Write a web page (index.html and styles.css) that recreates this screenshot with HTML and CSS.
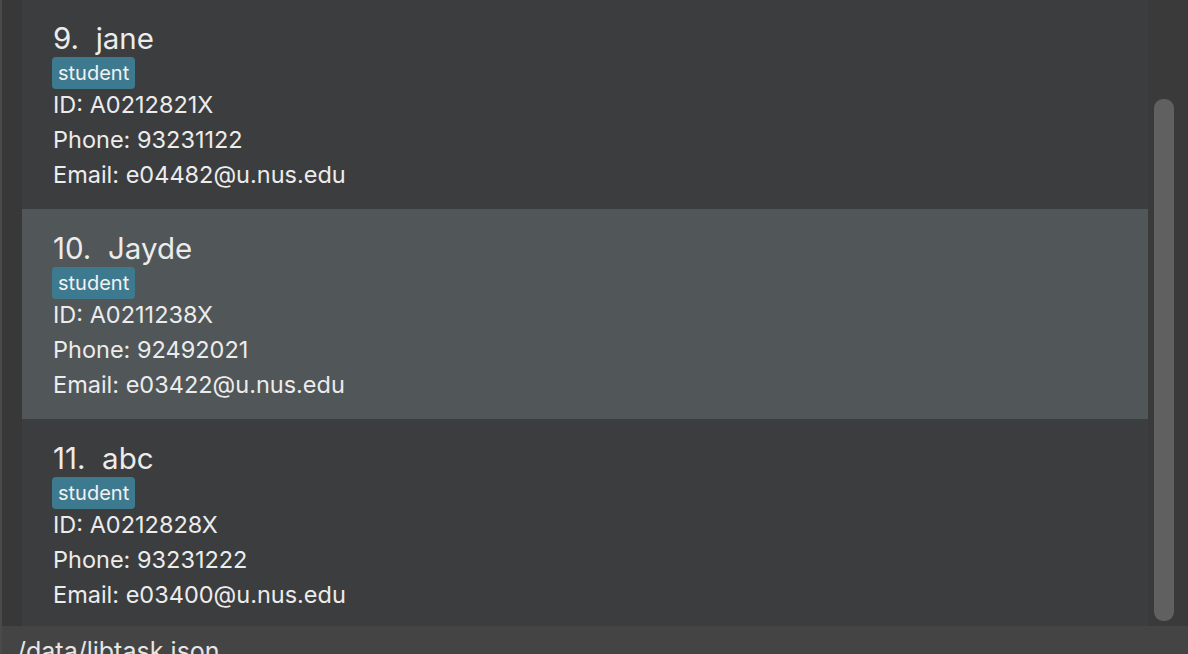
FILE: index.html
```html
<!DOCTYPE html>
<html>
<head>
<meta charset="utf-8">
<link rel="stylesheet" href="styles.css">
</head>
<body>
<div class="app">
  <div class="main">
    <div class="gutter"></div>
    <div class="list">
      <div class="list-inner">
        <div class="card">
          <div class="name">9.&nbsp; jane</div>
          <div class="tags"><span class="tag">student</span></div>
          <div class="details">
            <div>ID: A0212821X</div>
            <div>Phone: 93231122</div>
            <div>Email: e04482@u.nus.edu</div>
          </div>
        </div>
        <div class="card selected">
          <div class="name">10.&nbsp; Jayde</div>
          <div class="tags"><span class="tag">student</span></div>
          <div class="details">
            <div>ID: A0211238X</div>
            <div>Phone: 92492021</div>
            <div>Email: e03422@u.nus.edu</div>
          </div>
        </div>
        <div class="card">
          <div class="name">11.&nbsp; abc</div>
          <div class="tags"><span class="tag">student</span></div>
          <div class="details">
            <div>ID: A0212828X</div>
            <div>Phone: 93231222</div>
            <div>Email: e03400@u.nus.edu</div>
          </div>
        </div>
      </div>
    </div>
    <div class="scrolltrack"><div class="thumb"></div></div>
  </div>
  <div class="statusbar"><span class="path">/data/libtask.json</span></div>
</div>
</body>
</html>
```

FILE: styles.css
```css
html, body {
  margin: 0;
  padding: 0;
  width: 1188px;
  height: 654px;
  overflow: hidden;
  background: #444444;
}
.app {
  display: flex;
  flex-direction: column;
  width: 1188px;
  height: 654px;
  font-family: Inter, "Open Sans", sans-serif;
  color: #ececec;
}
.main {
  display: flex;
  height: 626px;
  border-left: 2px solid #4a4a4a;
  box-sizing: border-box;
}
.gutter {
  width: 20px;
  background: #383838;
}
.list {
  width: 1126px;
  background: #3c3d3f;
  overflow: hidden;
}
.list-inner {
  margin-top: -1px;
}
.card {
  height: 210px;
  box-sizing: border-box;
  padding: 22px 0 0 31px;
}
.card.selected {
  background: #515658;
}
.name {
  font-size: 29.5px;
  line-height: 34px;
  height: 34px;
  white-space: pre;
}
.tags {
  margin-top: 2px;
  height: 32px;
  display: flex;
}
.tag {
  display: inline-flex;
  align-items: center;
  height: 32px;
  padding: 0 6px;
  box-sizing: border-box;
  background: #3e7a8f;
  border-radius: 4px;
  font-size: 20px;
  color: #f2f2f2;
  margin-left: -1px;
}
.details {
  margin-top: -2px;
  font-size: 23.5px;
  line-height: 35px;
}
.scrolltrack {
  width: 40px;
  background: #3a3a3a;
  position: relative;
}
.thumb {
  position: absolute;
  left: 6px;
  top: 99px;
  width: 20px;
  height: 522px;
  background: #606060;
  border-radius: 9px;
}
.statusbar {
  height: 28px;
  background: #444444;
  border-left: 2px solid #4a4a4a;
  box-sizing: border-box;
  overflow: hidden;
  padding-left: 15px;
}
.path {
  display: block;
  font-size: 25px;
  line-height: 30px;
  margin-top: 10px;
  color: #e6e6e6;
}
```
